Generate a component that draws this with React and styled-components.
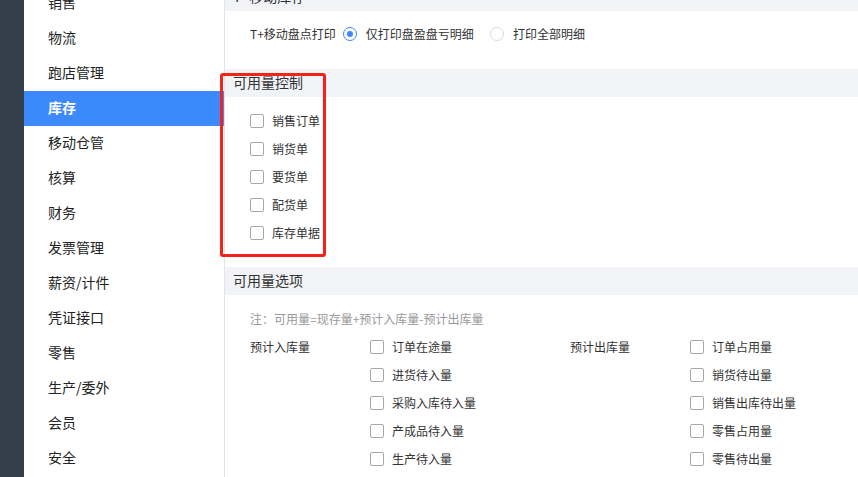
import React from "react";
import styled, { createGlobalStyle } from "styled-components";

const Global = createGlobalStyle`
  html, body { margin: 0; padding: 0; background: #fff; }
  body { font-family: "Noto Sans CJK SC", "Noto Sans", sans-serif; color: #333; overflow: hidden; }
  * { box-sizing: border-box; }
`;

const Page = styled.div`
  display: flex;
  width: 858px;
  height: 477px;
  overflow: hidden;
  position: relative;
`;

const Rail = styled.div`
  width: 24px;
  flex: none;
  background: #353f4c;
`;

const Sidebar = styled.nav`
  width: 201px;
  flex: none;
  border-right: 1px solid #e2e4e8;
  background: #fff;
`;

const MenuList = styled.ul`
  list-style: none;
  margin: -14px 0 0;
  padding: 0;
`;

const MenuItem = styled.li`
  height: 35px;
  display: flex;
  align-items: center;
  padding: 0 0 3px 24px;
  font-size: 14px;
  color: ${(p) => (p.$active ? "#fff" : "#222")};
  background: ${(p) => (p.$active ? "#3c89fc" : "transparent")};
  font-weight: ${(p) => (p.$active ? 700 : 400)};
`;

const Main = styled.main`
  flex: 1;
  min-width: 0;
  background: #fff;
`;

const Scroll = styled.div`
  margin-top: -17px;
`;

const Section = styled.section``;

const SectionHeader = styled.div`
  height: 28px;
  display: flex;
  align-items: center;
  padding: 0 0 2px 8px;
  background: #f2f3f7;
  font-size: 14px;
  color: #333;
`;

const SectionBody = styled.div`
  padding: ${(p) => p.$pad || "10px 0 20px 25px"};
`;

const Row = styled.div`
  height: 28px;
  display: flex;
  align-items: center;
  padding-bottom: 1px;
  font-size: 12px;
  color: #333;
`;

const RowLabel = styled.span`
  margin-right: 7px;
`;

const RadioOption = styled.label`
  display: inline-flex;
  align-items: center;
  gap: 9px;
  margin-right: 16px;
`;

const RadioCircle = styled.span`
  width: 14px;
  height: 14px;
  border-radius: 50%;
  border: 1px solid ${(p) => (p.$on ? "#3c89fc" : "#dcdcdc")};
  display: inline-flex;
  align-items: center;
  justify-content: center;
  &::after {
    content: "";
    width: 6px;
    height: 6px;
    border-radius: 50%;
    background: ${(p) => (p.$on ? "#3c89fc" : "transparent")};
  }
`;

const CheckOption = styled.label`
  display: inline-flex;
  align-items: center;
  gap: 8px;
`;

const Box = styled.span`
  width: 14px;
  height: 14px;
  border: 1px solid #a8a8a8;
  border-radius: 2px;
  background: #fff;
`;

const Note = styled(Row)`
  color: #999;
`;

const Groups = styled.div`
  display: flex;
`;

const Group = styled.div`
  flex: none;
  width: 320px;
  display: grid;
  grid-template-columns: 120px 1fr;
`;

const GroupLabel = styled(Row)``;

const GroupList = styled.div``;

const Annotation = styled.div`
  position: absolute;
  left: 220px;
  top: 73px;
  width: 106px;
  height: 184px;
  border: 3px solid #f5211b;
  border-radius: 3px;
  pointer-events: none;
`;

const menu = ["销售", "物流", "跑店管理", "库存", "移动仓管", "核算", "财务", "发票管理", "薪资/计件", "凭证接口", "零售", "生产/委外", "会员", "安全"];

const controls = ["销售订单", "销货单", "要货单", "配货单", "库存单据"];
const inItems = ["订单在途量", "进货待入量", "采购入库待入量", "产成品待入量", "生产待入量"];
const outItems = ["订单占用量", "销货待出量", "销售出库待出量", "零售占用量", "零售待出量"];

const Check = ({ children }) => (
  <Row>
    <CheckOption>
      <Box />
      <span>{children}</span>
    </CheckOption>
  </Row>
);

export default function App() {
  return (
    <>
      <Global />
      <Page>
        <Rail />
        <Sidebar>
          <MenuList>
            {menu.map((m) => (
              <MenuItem key={m} $active={m === "库存"}>{m}</MenuItem>
            ))}
          </MenuList>
        </Sidebar>
        <Main>
          <Scroll>
            <Section>
              <SectionHeader>T+移动库存</SectionHeader>
              <SectionBody $pad="9px 0 21px 25px">
                <Row>
                  <RowLabel>T+移动盘点打印</RowLabel>
                  <RadioOption><RadioCircle $on /><span>仅打印盘盈盘亏明细</span></RadioOption>
                  <RadioOption><RadioCircle /><span>打印全部明细</span></RadioOption>
                </Row>
              </SectionBody>
            </Section>
            <Section>
              <SectionHeader>可用量控制</SectionHeader>
              <SectionBody>
                {controls.map((c) => <Check key={c}>{c}</Check>)}
              </SectionBody>
            </Section>
            <Section>
              <SectionHeader>可用量选项</SectionHeader>
              <SectionBody>
                <Note>注：可用量=现存量+预计入库量-预计出库量</Note>
                <Groups>
                  <Group>
                    <GroupLabel>预计入库量</GroupLabel>
                    <GroupList>{inItems.map((c) => <Check key={c}>{c}</Check>)}</GroupList>
                  </Group>
                  <Group>
                    <GroupLabel>预计出库量</GroupLabel>
                    <GroupList>{outItems.map((c) => <Check key={c}>{c}</Check>)}</GroupList>
                  </Group>
                </Groups>
              </SectionBody>
            </Section>
          </Scroll>
        </Main>
        <Annotation />
      </Page>
    </>
  );
}
